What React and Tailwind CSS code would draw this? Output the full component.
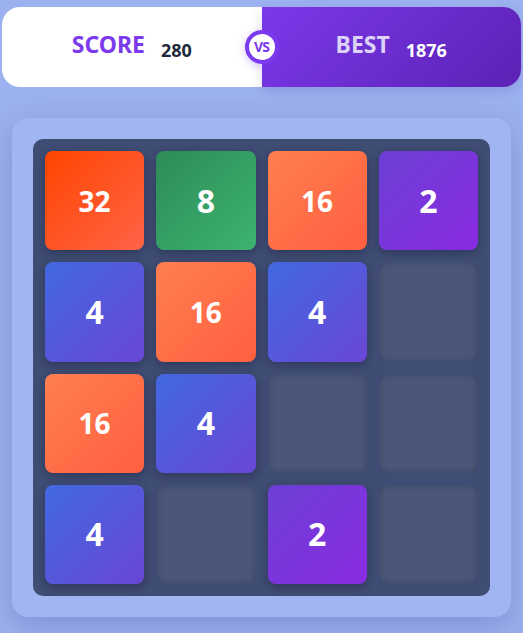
import React from "react";

const board = [32, 8, 16, 2, 4, 16, 4, 0, 16, 4, 0, 0, 4, 0, 2, 0];

const tileColor = {
  2: "bg-[linear-gradient(135deg,#6c3fd4,#8a2be2)]",
  4: "bg-[linear-gradient(135deg,#4169e1,#6a46d6)]",
  8: "bg-[linear-gradient(135deg,#2e8b57,#3cb371)]",
  16: "bg-[linear-gradient(135deg,#ff7f50,#ff5f40)]",
  32: "bg-[linear-gradient(135deg,#ff4500,#ff6347)]",
};

function Tile({ value }) {
  if (!value) {
    return (
      <div className="aspect-square rounded-lg bg-[#4a5779] shadow-[inset_0_0_6px_rgba(20,28,55,0.35)]" />
    );
  }
  const size = value < 10 ? "text-[32px]" : "text-[28px]";
  return (
    <div
      className={`aspect-square rounded-lg flex items-center justify-center text-white font-bold shadow-[0_3px_8px_rgba(15,20,45,0.35)] ${tileColor[value]} ${size}`}
    >
      <span className="leading-none">{value}</span>
    </div>
  );
}

export default function App() {
  return (
    <div
      className="min-h-[633px] w-full bg-[#9cb1ef] pt-[7px] px-[2px] pb-[16px]"
      style={{ fontFamily: '"Noto Sans", "Open Sans", sans-serif' }}
    >
      {/* score bar */}
      <div className="relative flex h-[80px] rounded-[18px]">
        <div className="flex-1 flex items-center justify-center gap-[16px] bg-white rounded-l-[18px]">
          <span className="text-[23px] font-bold text-[#7c3aed] leading-none mb-[6px]">SCORE</span>
          <span className="text-[18px] font-bold text-[#1e293b] leading-none mt-[6px]">280</span>
        </div>
        <div className="flex-1 flex items-center justify-center gap-[16px] rounded-r-[18px] bg-[linear-gradient(135deg,#7b38ea,#5b22b4)] shadow-[0_4px_12px_rgba(60,30,140,0.15)]">
          <span className="text-[23px] font-bold text-[#ddd3f8] leading-none mb-[6px]">BEST</span>
          <span className="text-[18px] font-bold text-white leading-none mt-[6px]">1876</span>
        </div>
        <div className="absolute left-1/2 top-1/2 -translate-x-1/2 -translate-y-1/2 w-[34px] h-[34px] rounded-full border-4 border-[#7c3aed] bg-white flex items-center justify-center shadow-[0_2px_8px_rgba(124,58,237,0.3)]">
          <span className="text-[14px] font-bold text-[#7c3aed] leading-none tracking-[-0.8px]">VS</span>
        </div>
      </div>

      {/* game panel */}
      <div className="mt-[31px] mx-[10px] rounded-2xl bg-[#a1b5f2] p-[21px] shadow-[0_10px_30px_rgba(40,60,130,0.25)]">
        <div className="rounded-[10px] bg-[#3f4c73] p-3 grid grid-cols-4 gap-3">
          {board.map((v, i) => (
            <Tile key={i} value={v} />
          ))}
        </div>
      </div>
    </div>
  );
}
